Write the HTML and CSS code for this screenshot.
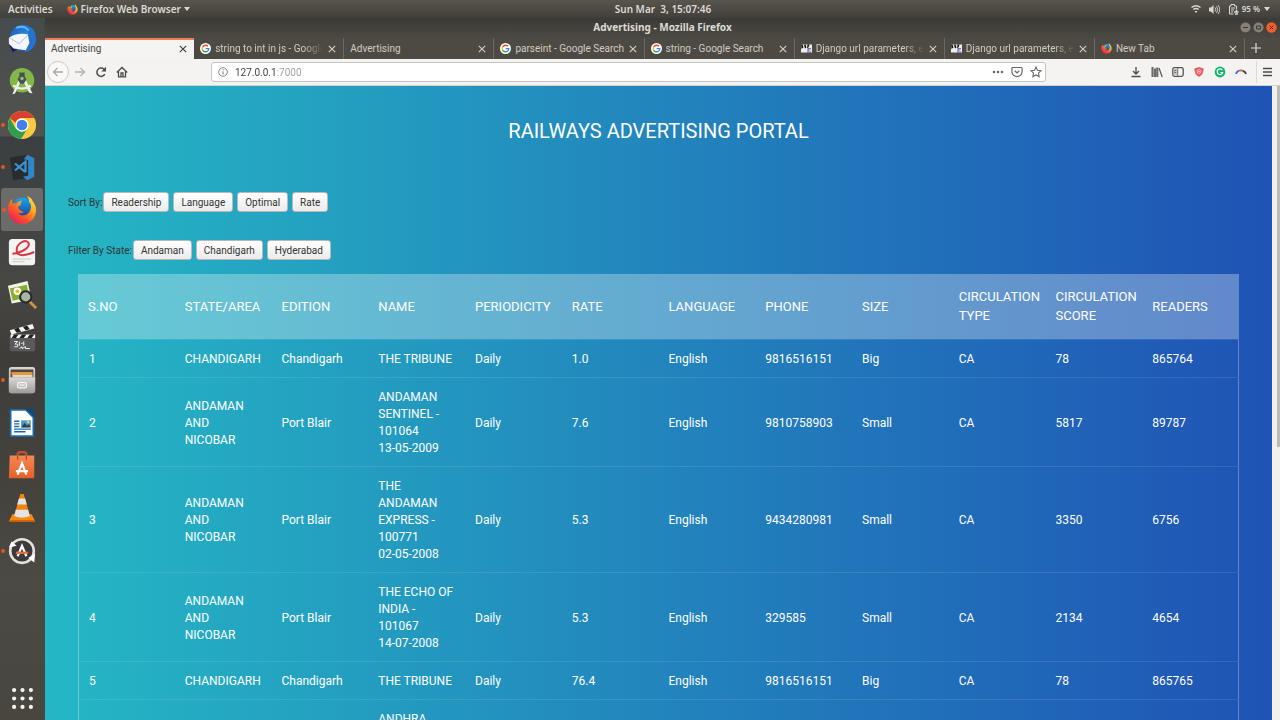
FILE: index.html
```html
<!DOCTYPE html>
<html lang="en">
<head>
<meta charset="utf-8">
<title>Advertising</title>
<link rel="stylesheet" href="styles.css">
</head>
<body>
<svg class="sprite" aria-hidden="true">
  <defs>
    <linearGradient id="fx-flame" x1="1" y1="0" x2="0.2" y2="1"><stop offset="0" stop-color="#fff04a"/><stop offset="0.35" stop-color="#ffb01c"/><stop offset="0.65" stop-color="#ff5a26"/><stop offset="1" stop-color="#e8155d"/></linearGradient>
    <linearGradient id="fx-globe" x1="0" y1="0" x2="0" y2="1"><stop offset="0" stop-color="#10a8f5"/><stop offset="1" stop-color="#26307f"/></linearGradient>
    <linearGradient id="bird" x1="0" y1="0" x2="1" y2="1"><stop offset="0" stop-color="#1c4fae"/><stop offset="0.5" stop-color="#2e8be0"/><stop offset="1" stop-color="#152a86"/></linearGradient>
    <linearGradient id="bag" x1="0" y1="0" x2="0" y2="1"><stop offset="0" stop-color="#f28a55"/><stop offset="1" stop-color="#e85f28"/></linearGradient>
    <linearGradient id="metal" x1="0" y1="0" x2="0" y2="1"><stop offset="0" stop-color="#d8d8d8"/><stop offset="1" stop-color="#9b9b9b"/></linearGradient>
  </defs>
  <symbol id="close" viewBox="0 0 10 10"><path d="M1.8 1.8l6.4 6.4M8.2 1.8L1.8 8.2" fill="none" stroke="currentColor" stroke-width="1.2"/></symbol>
  <symbol id="google" viewBox="0 0 24 24"><circle cx="12" cy="12" r="12" fill="#fff"/><path d="M17.3 7.2A7.2 7.2 0 0 0 5.7 8.6" fill="none" stroke="#ea4335" stroke-width="3"/><path d="M5.7 8.6a7.2 7.2 0 0 0 0 6.8" fill="none" stroke="#fbbc05" stroke-width="3"/><path d="M5.7 15.4a7.2 7.2 0 0 0 11.3 1.8" fill="none" stroke="#34a853" stroke-width="3"/><path d="M17 17.2a7.2 7.2 0 0 0 2.2-4.8H12.2" fill="none" stroke="#4285f4" stroke-width="3"/></symbol>
  <symbol id="firefox" viewBox="0 0 32 32"><circle cx="17" cy="15" r="12" fill="url(#fx-globe)"/><path d="M21 1c2 2 3 4 2.500 6.500C27 10 26 17 22 20c-4 3-9 2-10-1 2 1 4 0 6-1-3-1-5-2-6-4 0-2 1-3 3-3-1-2 0-3 1-5-3 0-5 1-6 3-1 0-3 0-4 0-1-1-1-3 0-5C2 7 0 12 1.500 18 3 26 9 31 16.500 31 25 31 31 24 31 16c0-4-2-8-4-10C27 4 24 2 21 1z" fill="url(#fx-flame)"/></symbol>
  <symbol id="clapper" viewBox="0 0 22 16"><path d="M0 0h22v16H0z" fill="#eee"/><path d="M0 0h3l2 6-4 3zM6 1l3-1 2 6-3 2zM13 0h4l-2 6-3 1z" fill="#161616"/><path d="M13 8h7M13 11h6M12 15h8M14 8v6" stroke="#4a4a9d" stroke-width="1.500" fill="none"/></symbol>
</svg>

<header class="topbar">
  <div class="topbar__left">
    <button class="plain">Activities</button>
    <button class="plain topbar__app"><svg class="i11"><use href="#firefox"/></svg>Firefox Web Browser<span class="caret"></span></button>
  </div>
  <button class="plain topbar__clock">Sun Mar&nbsp; 3, 15:07:46</button>
  <div class="topbar__status">
    <svg class="i10" viewBox="0 0 20 20" fill="none" stroke="#dcd9d2" stroke-width="2.500"><path d="M1 7q9-7 18 0" /><path d="M4.500 11q5.500-4 11 0" /><path d="M7 14h6l-3 4z" fill="#dcd9d2" stroke="none"/></svg>
    <svg class="i11" viewBox="0 0 22 20"><path d="M0 6h4l5-5v18l-5-5H0z" fill="#dcd9d2"/><path d="M12 6q3 4 0 8M15 3.500q5 6.500 0 13M18 1q7 9 0 18" fill="none" stroke="#dcd9d2" stroke-width="1.800"/></svg>
    <svg class="i11" viewBox="0 0 20 22" fill="none" stroke="#dcd9d2" stroke-width="2"><path d="M10 20H2V4h3V1h7v3h4v6M5 8h8M5 12h6M5 16h4"/><path d="M16 11v4M11 16h9M13 20h6" stroke-width="3"/></svg>
    <span class="battery">95 %</span><span class="caret"></span>
  </div>
</header>

<div class="desktop">
  <nav class="dock" aria-label="Applications">
    <ul class="dock__apps">
      <li><svg class="app app--lg" viewBox="0 0 32 32"><circle cx="17" cy="15" r="14" fill="url(#bird)"/><path d="M7 5Q17-3 26 5q7 8 4 16-3 8-12 9l7-12-3-10z" fill="#2474cf"/><path d="M10 4q8-3 13 3" fill="none" stroke="#5cb6f0" stroke-width="2"/><path d="M1 19l5 11 5-3z" fill="#22165f"/><path d="M2 15Q10 9 22 11l2 9-4 8-13-2-5-5z" fill="#f3f6fa"/><path d="M3 15l10 6 9-9" fill="none" stroke="#aeb8c6"/></svg></li>
      <li><svg class="app" viewBox="0 0 32 32"><circle cx="16" cy="14" r="14" fill="#80b84a"/><path d="M14 9L5 30l3-1 9-19zM18 9l10 20-4-1-9-18z" fill="#f2f2f2"/><path d="M6 20q10 7 20 0" fill="none" stroke="#eee" stroke-width="2.500"/><path d="M13 5h6v4l2 4-3 5h-4l-3-5 2-4z" fill="#4a5052"/><circle cx="16" cy="12" r="2" fill="#9cba7a"/></svg></li>
      <li class="running"><svg class="app app--lg" viewBox="0 0 32 32"><circle cx="16" cy="16" r="15" fill="#fbc93d"/><path d="M3 8.500A15 15 0 0 1 29 8.500H16a7.500 7.500 0 0 0-7 5z" fill="#d8402f"/><path d="M3 8.500A15 15 0 0 0 15 31l7-11.500-6 4-7-4z" fill="#2f9e50"/><circle cx="16" cy="16" r="7" fill="#fff"/><circle cx="16" cy="16" r="5.700" fill="#427fe8"/></svg></li>
      <li class="running"><svg class="app" viewBox="0 0 32 32"><path d="M2 5l20-3 5 26-21 3z" fill="#2b2b2d"/><path d="M22 2l8 4v21l-8 4-5-4 6-1V8l-5-1z" fill="#2f86c9"/><path d="M8 12l12 10M8 20L20 10v12" fill="none" stroke="#3795d4" stroke-width="2.600"/></svg></li>
      <li class="running active"><svg class="app app--lg"><use href="#firefox"/></svg></li>
      <li><svg class="app" viewBox="0 0 32 32"><rect x="1" y="1" width="30" height="30" rx="4" fill="#f3f3f3"/><path d="M5 18C16 17 27 10 23 5c-4-4-14 2-13 10 1 7 11 5 20 1" fill="none" stroke="#dc3341" stroke-width="2.200"/><path d="M5 24h21M5 27h14" stroke="#c4c4c4"/></svg></li>
      <li><svg class="app app--lg" viewBox="0 0 32 32"><path d="M1 6l21-5 4 20-21 4z" fill="#f2f2e9"/><path d="M3 9l18-4 3 13-18 4z" fill="#86ae36"/><circle cx="11" cy="12" r="4" fill="#fff"/><circle cx="11" cy="12" r="2" fill="#f3b91a"/><path d="M24 23l7 7" stroke="#d49440" stroke-width="3"/><circle cx="20" cy="18" r="6" fill="#a9b4a2" stroke="#252a2b" stroke-width="2.200"/></svg></li>
      <li><svg class="app" viewBox="0 0 32 32"><rect x="2" y="13" width="29" height="18" rx="2" fill="#5a5a5a"/><path d="M2 7L28 0l2 5L4 12zM3 12h28v4H3z" fill="#f4f4f4"/><path d="M7 6l5-2 3 5-5 1zM17 3l5-1 3 4-5 1zM7 12h5l-3 4H4zM16 12h5l-3 4h-5zM25 12h5l-3 4h-5z" fill="#202020"/><path d="M7 20h4l-3 3h3v3H7M13 20v5M15 22h2M18 20v5M13 28l3-2v2l4-2v2h5" fill="none" stroke="#fff"/></svg></li>
      <li class="running"><svg class="app" viewBox="0 0 32 32"><rect x="1" y="1" width="30" height="30" rx="3" fill="url(#metal)"/><path d="M3 4h26v9H3z" fill="#55493c"/><path d="M4 7h24v3H4z" fill="#ed9c45"/><path d="M5 10h23v3H5z" fill="#e8d9b8"/><path d="M1 13h30v15q0 3-3 3H4q-3 0-3-3z" fill="url(#metal)"/><rect x="11" y="19" width="10" height="6" rx="2" fill="#b7b7b7" stroke="#f8f8f8" stroke-width="1.500"/><path d="M13 22h6" stroke="#eee" stroke-width="2"/></svg></li>
      <li><svg class="app" viewBox="0 0 32 32"><path d="M2 0h19l9 9v23H2z" fill="#1c69a8"/><path d="M4 2h16l8 8v20H4z" fill="#fff"/><path d="M20 0h10v9z" fill="#0d4a7d"/><path d="M7 14h6M7 17h6M7 20h6M7 23h19M7 26h13" stroke="#1c69a8" stroke-width="1.500"/><path d="M15 13h11v8H15z" fill="#4099d9"/><path d="M15 21l4-5 3 3 2-2 2 4z" fill="#33413f"/><circle cx="23" cy="15" r="1.500" fill="#fbc83c"/></svg></li>
      <li><svg class="app" viewBox="0 0 32 32"><path d="M11 8V4q0-3 5-3t5 3v4" fill="none" stroke="#dc6239" stroke-width="2.500"/><path d="M2 5h28v26H1z" fill="url(#bag)"/><path d="M11 10V4q0-3 5-3t5 3v6" fill="none" stroke="#b9462b" stroke-width="1.500"/><path d="M11 27l5-13 5 13M9 23h14" fill="none" stroke="#fff" stroke-width="2.500"/></svg></li>
      <li><svg class="app" viewBox="0 0 32 32"><path d="M5 23h22l4 8H1z" fill="#f38b10"/><path d="M14 0h4l7 25q-9 5-18 0z" fill="#f1840f"/><path d="M12.500 5h7l2 7h-11zM9 18h14l2 7q-9 4-18 0z" fill="#e4e4e4"/><path d="M1 30h30v2H1z" fill="#c75c08"/></svg></li>
      <li class="running"><svg class="app" viewBox="0 0 32 32"><circle cx="16" cy="16" r="13.500" fill="#3c3b39" stroke="#e1e1df" stroke-width="3"/><path d="M1 12l3-7 6 5zM31 19l-1 10-7-5z" fill="#fff"/><path d="M11 22l5-12 5 12" fill="none" stroke="#fff" stroke-width="2.500"/><path d="M9 18h14" stroke="#ee6b35" stroke-width="2.500"/></svg></li>
    </ul>
    <button class="plain dock__grid" aria-label="Show Applications"><svg viewBox="0 0 20 20" fill="#f4f3f1"><circle cx="2" cy="2" r="2"/><circle cx="10" cy="2" r="2"/><circle cx="18" cy="2" r="2"/><circle cx="2" cy="10" r="2"/><circle cx="10" cy="10" r="2"/><circle cx="18" cy="10" r="2"/><circle cx="2" cy="18" r="2"/><circle cx="10" cy="18" r="2"/><circle cx="18" cy="18" r="2"/></svg></button>
  </nav>

  <div class="window">
    <div class="titlebar">
      <span></span>
      <span class="titlebar__title">Advertising - Mozilla Firefox</span>
      <div class="titlebar__controls">
        <button class="plain" aria-label="Minimize"><svg class="i11" viewBox="0 0 11 11"><circle cx="5.500" cy="5.500" r="5" fill="#858179"/><path d="M3 5.500h5" stroke="#3d3b37"/></svg></button>
        <button class="plain" aria-label="Restore"><svg class="i11" viewBox="0 0 11 11"><circle cx="5.500" cy="5.500" r="5" fill="#858179"/><path d="M3.500 4h4v3h-4z" fill="none" stroke="#3d3b37"/></svg></button>
        <button class="plain" aria-label="Close"><svg class="i11" viewBox="0 0 11 11"><circle cx="5.500" cy="5.500" r="5.200" fill="#ee5f2d"/><path d="M3.800 3.800l3.400 3.400M7.200 3.800L3.800 7.200" stroke="#5b2a17"/></svg></button>
      </div>
    </div>

    <div class="tabs">
      <div class="tab tab--active"><span class="tab__text tab__text--fit">Advertising</span><button class="plain" aria-label="Close tab"><svg class="i10"><use href="#close"/></svg></button></div>
      <div class="tab"><svg class="i11"><use href="#google"/></svg><span class="tab__text">string to int in js - Google</span><button class="plain" aria-label="Close tab"><svg class="i10"><use href="#close"/></svg></button></div>
      <div class="tab"><span class="tab__text tab__text--fit">Advertising</span><button class="plain" aria-label="Close tab"><svg class="i10"><use href="#close"/></svg></button></div>
      <div class="tab"><svg class="i11"><use href="#google"/></svg><span class="tab__text tab__text--fit">parseint - Google Search</span><button class="plain" aria-label="Close tab"><svg class="i10"><use href="#close"/></svg></button></div>
      <div class="tab"><svg class="i11"><use href="#google"/></svg><span class="tab__text tab__text--fit">string - Google Search</span><button class="plain" aria-label="Close tab"><svg class="i10"><use href="#close"/></svg></button></div>
      <div class="tab"><svg class="i11"><use href="#clapper"/></svg><span class="tab__text">Django url parameters, e</span><button class="plain" aria-label="Close tab"><svg class="i10"><use href="#close"/></svg></button></div>
      <div class="tab"><svg class="i11"><use href="#clapper"/></svg><span class="tab__text">Django url parameters, e</span><button class="plain" aria-label="Close tab"><svg class="i10"><use href="#close"/></svg></button></div>
      <div class="tab"><svg class="i11"><use href="#firefox"/></svg><span class="tab__text tab__text--fit">New Tab</span><button class="plain" aria-label="Close tab"><svg class="i10"><use href="#close"/></svg></button></div>
      <button class="plain tabs__new" aria-label="New tab"><svg class="i10" viewBox="0 0 10 10"><path d="M5 0v10M0 5h10" stroke="#dedbd4" stroke-width="1.200"/></svg></button>
    </div>

    <div class="toolbar">
      <div class="toolbar__nav">
        <button class="plain back" aria-label="Back"><svg class="i12" viewBox="0 0 12 12"><path d="M11 6H1.500M5.500 2l-4 4 4 4" fill="none" stroke="#aaa9a6" stroke-width="1.300"/></svg></button>
        <button class="plain" aria-label="Forward"><svg class="i12" viewBox="0 0 12 12"><path d="M1 6h9.500M6.500 2l4 4-4 4" fill="none" stroke="#b3b2af" stroke-width="1.300"/></svg></button>
        <button class="plain" aria-label="Reload"><svg class="i12" viewBox="0 0 12 12"><path d="M9.800 8.200A4.200 4.200 0 1 1 9 3.200" fill="none" stroke="#4c4b49" stroke-width="1.500"/><path d="M11 .8v4.700H6.300z" fill="#4c4b49"/></svg></button>
        <button class="plain" aria-label="Home"><svg class="i12" viewBox="0 0 12 12"><path d="M.8 6.500L6 1.500l5.200 5M2.500 5.500v5.300h7V5.500M5 10.500V7h2v3.500" fill="none" stroke="#4c4b49" stroke-width="1.300"/></svg></button>
      </div>
      <div class="urlbar">
        <svg class="i10" viewBox="0 0 10 10"><circle cx="5" cy="5" r="4.300" fill="none" stroke="#777" stroke-width=".9"/><path d="M5 4.300v3.200M5 2.300v1.100" stroke="#777"/></svg>
        <input class="urlbar__input" type="text" value="127.0.0.1:7000" aria-label="Address">
        <button class="plain" aria-label="Page actions"><svg class="i12" viewBox="0 0 12 12" fill="#6c6b69"><circle cx="2" cy="6" r="1.300"/><circle cx="6" cy="6" r="1.300"/><circle cx="10" cy="6" r="1.300"/></svg></button>
        <button class="plain" aria-label="Save to Pocket"><svg class="i12" viewBox="0 0 12 12"><path d="M1.800 1.500h8.400q.9 0 .9.900v3.100a5.100 5.100 0 0 1-10.200 0V2.400q0-.9.900-.9z" fill="none" stroke="#6c6b69" stroke-width="1.200"/><path d="M3.700 4.700L6 6.900l2.300-2.200" fill="none" stroke="#6c6b69" stroke-width="1.300"/></svg></button>
        <button class="plain" aria-label="Bookmark"><svg class="i12" viewBox="0 0 12 12"><path d="M6 1l1.500 3.200 3.500.5-2.500 2.400.6 3.500L6 8.900l-3.100 1.700.6-3.500L1 4.700l3.500-.5z" fill="none" stroke="#6c6b69" stroke-width="1.100"/></svg></button>
      </div>
      <div class="toolbar__tools">
        <button class="plain" aria-label="Downloads"><svg class="i12" viewBox="0 0 12 12"><path d="M6 1v7M3 5l3 3 3-3M1.500 10.500h9" fill="none" stroke="#4c4b49" stroke-width="1.300"/></svg></button>
        <button class="plain" aria-label="Library"><svg class="i12" viewBox="0 0 12 12"><path d="M1.500 1v10M4 2.500V11M6.300 1.500V11" stroke="#6a6967" stroke-width="2.100"/><path d="M8 2l3.200 9" stroke="#555452" stroke-width="1.200"/></svg></button>
        <button class="plain" aria-label="Sidebars"><svg class="i12" viewBox="0 0 12 12"><rect x=".8" y="1.700" width="10.400" height="8.600" rx="1.500" fill="none" stroke="#555452" stroke-width="1.300"/><path d="M2 3h3.500v6H2z" fill="#c4c3c0"/><path d="M5.700 2v8" stroke="#777"/><path d="M2.500 4.500h1.700M2.500 6.500h1.700" stroke="#666"/></svg></button>
        <button class="plain" aria-label="Shield"><svg class="i12" viewBox="0 0 12 12"><path d="M6 1l4.700 1.500q0 6-4.700 8.500-4.700-2.500-4.700-8.500z" fill="#ee5a60"/><circle cx="6" cy="5.500" r="2" fill="none" stroke="#fbc9cb" stroke-width=".9"/><circle cx="6" cy="5.500" r=".7" fill="#fff"/></svg></button>
        <button class="plain" aria-label="Grammar"><svg class="i12" viewBox="0 0 12 12"><circle cx="6" cy="6" r="5.400" fill="#12b76f"/><path d="M8.400 4.300A2.800 2.800 0 1 0 8.700 6.500H6.500" fill="none" stroke="#fff" stroke-width="1.200"/></svg></button>
        <button class="plain" aria-label="Extension"><svg class="i12" viewBox="0 0 12 12" fill="none" stroke-width="1.800"><path d="M.8 7.800Q2 5.500 4 4.700" stroke="#3c76c9"/><path d="M4 4.700q2-.9 4 .2" stroke="#e2523b"/><path d="M8 4.900q2 .8 3.200 3" stroke="#3b4245"/></svg></button>
        <button class="plain toolbar__menu" aria-label="Menu"><svg class="i12" viewBox="0 0 12 12"><path d="M2 2.500h9M2 6h9M2 9.500h9" stroke="#4c4b49" stroke-width="1.300"/></svg></button>
      </div>
    </div>

    <div class="viewport">
      <main class="page">
        <h1>RAILWAYS ADVERTISING PORTAL</h1>
        <div class="options" role="group" aria-labelledby="sort-label"><span id="sort-label">Sort By:</span><button class="btn">Readership</button><button class="btn">Language</button><button class="btn">Optimal</button><button class="btn">Rate</button></div>
        <div class="options" role="group" aria-labelledby="filter-label"><span id="filter-label">Filter By State:</span><button class="btn">Andaman</button><button class="btn">Chandigarh</button><button class="btn">Hyderabad</button></div>
        <table class="ads">
          <thead>
            <tr><th>S.NO</th><th>STATE/AREA</th><th>EDITION</th><th>NAME</th><th>PERIODICITY</th><th>RATE</th><th>LANGUAGE</th><th>PHONE</th><th>SIZE</th><th>CIRCULATION TYPE</th><th>CIRCULATION SCORE</th><th>READERS</th></tr>
          </thead>
          <tbody>
            <tr><td>1</td><td>CHANDIGARH</td><td>Chandigarh</td><td>THE TRIBUNE</td><td>Daily</td><td>1.0</td><td>English</td><td>9816516151</td><td>Big</td><td>CA</td><td>78</td><td>865764</td></tr>
            <tr><td>2</td><td>ANDAMAN AND NICOBAR</td><td>Port Blair</td><td>ANDAMAN SENTINEL - 101064<br>13-05-2009</td><td>Daily</td><td>7.6</td><td>English</td><td>9810758903</td><td>Small</td><td>CA</td><td>5817</td><td>89787</td></tr>
            <tr><td>3</td><td>ANDAMAN AND NICOBAR</td><td>Port Blair</td><td>THE ANDAMAN EXPRESS - 100771<br>02-05-2008</td><td>Daily</td><td>5.3</td><td>English</td><td>9434280981</td><td>Small</td><td>CA</td><td>3350</td><td>6756</td></tr>
            <tr><td>4</td><td>ANDAMAN AND NICOBAR</td><td>Port Blair</td><td>THE ECHO OF INDIA - 101067<br>14-07-2008</td><td>Daily</td><td>5.3</td><td>English</td><td>329585</td><td>Small</td><td>CA</td><td>2134</td><td>4654</td></tr>
            <tr><td>5</td><td>CHANDIGARH</td><td>Chandigarh</td><td>THE TRIBUNE</td><td>Daily</td><td>76.4</td><td>English</td><td>9816516151</td><td>Big</td><td>CA</td><td>78</td><td>865765</td></tr>
            <tr><td></td><td></td><td></td><td>ANDHRA</td><td></td><td></td><td></td><td></td><td></td><td></td><td></td><td></td></tr>
          </tbody>
        </table>
      </main>
      <div class="scrollbar"><div class="scrollbar__thumb"></div></div>
    </div>
  </div>
</div>
</body>
</html>
```
FILE: styles.css
```css
* { box-sizing: border-box; }

body {
  margin: 0;
  height: 100vh;
  display: flex;
  flex-direction: column;
  overflow: hidden;
  background: #45443f;
  font: 10px/16px "Noto Sans", "Open Sans", sans-serif;
}

.sprite { position: absolute; width: 0; height: 0; }
svg { display: block; flex: none; }
.i10 { width: 10px; height: 10px; }
.i11 { width: 11px; height: 11px; }
.i12 { width: 12px; height: 12px; }

.plain {
  margin: 0;
  padding: 0;
  border: 0;
  background: none;
  color: inherit;
  font: inherit;
}

/* System bar */
.topbar {
  flex: none;
  height: 18px;
  display: grid;
  grid-template-columns: 1fr auto 1fr;
  align-items: center;
  padding: 0 10px 0 8px;
  background: linear-gradient(#58554d, #403f3a);
  color: #dcd9d2;
  font-weight: 600;
}
.topbar__left, .topbar__app, .topbar__status { display: flex; align-items: center; }
.topbar__left { gap: 14px; }
.topbar__app { gap: 3px; }
.topbar__clock { padding-left: 48px; }
.topbar__status { justify-content: flex-end; gap: 8px; }
.battery { font-size: 8px; margin: 0 -4px 0 -5px; }
.caret { border: 3px solid transparent; border-top: 4px solid #dcd9d2; border-bottom: 0; }

.desktop { flex: 1; min-height: 0; display: flex; }

/* Launcher */
.dock {
  flex: none;
  width: 45px;
  display: flex;
  flex-direction: column;
  justify-content: space-between;
  align-items: center;
  padding-bottom: 11px;
  border-right: 1px solid #3e4b49;
  background: linear-gradient(#464b4d 0, #52534e 118px, #3a3f41 119px, #474744 260px, #3e3d3a 340px, #44433d 480px, #4b4a44 560px, #48463f 100%);
}
.dock__apps {
  width: 100%;
  height: 554px;
  margin: 0;
  padding: 0;
  list-style: none;
  display: flex;
  flex-direction: column;
}
.dock__apps li {
  flex: 1;
  display: flex;
  align-items: center;
  justify-content: center;
  position: relative;
}
.dock__apps .active { margin: 0 1px; border-radius: 3px; background: #6b6c6a; }
.running::before {
  content: "";
  position: absolute;
  left: 1px;
  width: 4px;
  height: 4px;
  border-radius: 2px;
  background: #e95420;
}
.app { width: 28px; height: 28px; }
.app--lg { width: 30px; height: 30px; }
.dock__grid svg { width: 21px; height: 21px; }

/* Browser window */
.window { flex: 1; min-width: 0; display: flex; flex-direction: column; }
.titlebar {
  flex: none;
  height: 20px;
  display: grid;
  grid-template-columns: 1fr auto 1fr;
  align-items: center;
  padding: 0 3px 2px;
  background: linear-gradient(#3b3a36, #4b4942);
  color: #dedbd4;
  font-weight: 700;
}
.titlebar__controls { display: flex; justify-content: flex-end; gap: 2px; }

.tabs {
  flex: none;
  height: 21px;
  display: flex;
  background: #4d4a43;
  color: #cfccc4;
  font-family: Roboto, sans-serif;
}
.tab {
  flex: 1;
  min-width: 0;
  display: flex;
  align-items: center;
  gap: 4px;
  padding: 0 6px;
  border-right: 1px solid #6b6860;
}
.tab--active {
  border-right: 0;
  background: #f5f4f2;
  box-shadow: inset 0 2px #ee7d56;
  color: #45433f;
}
.tab__text {
  flex: 1;
  min-width: 0;
  overflow: hidden;
  white-space: nowrap;
  mask-image: linear-gradient(to left, transparent, #000 20px);
}
.tab__text--fit { mask-image: none; }
.tabs__new { width: 27px; padding: 0 0 2px 6px; margin-right: 8px; }

.toolbar {
  flex: none;
  height: 27px;
  display: flex;
  align-items: center;
  background: #f4f3f1;
  border-bottom: 1px solid #d4d2ce;
}
.toolbar__nav { width: 166px; display: flex; align-items: center; gap: 9px; padding-left: 2px; }
.back {
  width: 22px;
  height: 22px;
  display: grid;
  place-items: center;
  margin-right: -4px;
  border: 1px solid #cbc9c5;
  border-radius: 50%;
  background: #faf9f8;
}
.urlbar {
  flex: 1;
  height: 20px;
  display: flex;
  align-items: center;
  gap: 7px;
  padding: 0 3px 0 6px;
  border: 1px solid #c6c4c0;
  border-radius: 3px;
  background: #fff;
}
.urlbar__input {
  flex: 1;
  min-width: 0;
  padding: 1px 0 0;
  border: 0;
  font: 10px/16px Roboto, sans-serif;
  color: #3c3b38;
  -webkit-text-fill-color: transparent;
  background: linear-gradient(to right, #3c3b38 42px, #9b9a97 42px);
  background-clip: text;
  -webkit-background-clip: text;
}
.toolbar__tools {
  width: 234px;
  display: flex;
  align-items: center;
  justify-content: flex-end;
  gap: 9px;
  padding-right: 7px;
}
.toolbar__menu { height: 22px; padding-left: 4px; border-left: 1px solid #dbd9d6; }

/* Page */
.viewport { flex: 1; min-height: 0; display: flex; }
.page {
  flex: 1;
  min-width: 0;
  overflow: hidden;
  padding: 31px 23px 0;
  background: linear-gradient(to right, #25b7c4, #1f53b5);
  color: #fff;
  font-family: Roboto, sans-serif;
}
.page h1 {
  margin: 0 0 47px;
  text-align: center;
  font-size: 20px;
  line-height: 28px;
  font-weight: 400;
}
.options {
  display: flex;
  align-items: center;
  gap: 4px;
  margin-bottom: 28px;
  color: #333;
}
.options + .options { margin-bottom: 14px; }
.options span { margin-right: -3px; padding-top: 1px; }
.btn {
  height: 20px;
  padding: 1px 7px 0;
  border: 1px solid #b9b9b9;
  border-radius: 3px;
  background: linear-gradient(#fff, #ebebeb);
  color: #333;
  font: 10px/16px Roboto, sans-serif;
}

.ads {
  width: calc(100% - 20px);
  margin: 0 10px;
  table-layout: fixed;
  border-collapse: separate;
  border-spacing: 0;
  text-align: left;
}
.ads th {
  padding: 13px 0 14px 10px;
  background: rgba(255, 255, 255, 0.3);
  font-size: 13px;
  line-height: 19px;
  font-weight: 400;
}
.ads td {
  padding: 11px 10px 9px;
  border-bottom: 1px solid rgba(255, 255, 255, 0.1);
  font-size: 12px;
  line-height: 17px;
}
.ads tbody tr:first-child td { border-top: 1px solid rgba(255, 255, 255, 0.1); }
.ads td:first-child { border-left: 1px solid rgba(255, 255, 255, 0.3); }
.ads td:last-child { border-right: 1px solid rgba(255, 255, 255, 0.3); }

.scrollbar { flex: none; width: 8px; padding-left: 5px; background: #f1f0ef; }
.scrollbar__thumb { height: 57%; background: #bcbab7; }
```
